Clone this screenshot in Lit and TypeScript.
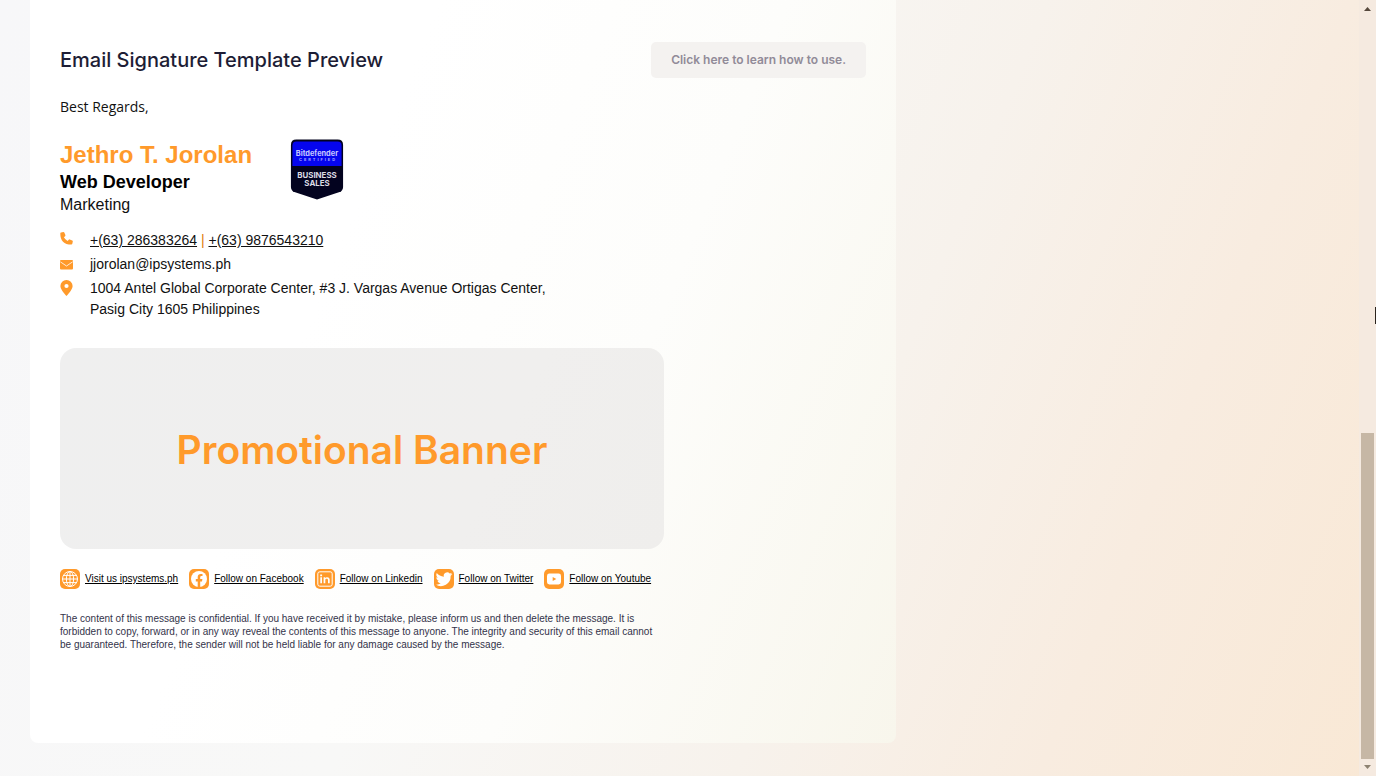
import { LitElement, html, css, svg } from "lit";
import { customElement } from "lit/decorators.js";

const glyphs = {
  globe: svg`<g fill="none" stroke="#fff" stroke-width="1"><circle cx="10" cy="10" r="7.500"/><ellipse cx="10" cy="10" rx="3.600" ry="7.500"/><path d="M10 2.500v15M2.500 10h15M3.600 6.400h12.800M3.600 13.600h12.800"/></g>`,
  facebook: svg`<circle cx="10" cy="10" r="8" fill="#fff"/><path fill="#ff9a2b" d="M8.700 18v-5.600H6.800V10h1.900V8.300c0-2.200 1.200-3.300 3.100-3.300.9 0 1.700.1 1.700.1v2h-1c-.9 0-1.300.6-1.300 1.300V10h2.200l-.4 2.400h-1.800V18z"/>`,
  linkedin: svg`<rect x="2.800" y="2.800" width="14.400" height="14.400" rx="2" fill="none" stroke="#fff" stroke-width="1"/><path fill="#fff" d="M5.300 8.300h1.700v6H5.300zM5.200 5.400h1.900v1.800H5.200zM8.600 8.300h1.600v.9c.9-1.600 4.500-1.500 4.500 1.500v3.600H13v-3.100c0-2-2.700-1.900-2.700 0v3.100H8.600z"/>`,
  twitter: svg`<path fill="#fff" transform="translate(1.800 1.600) scale(.7)" d="M23.600 4.900c-.9.400-1.800.7-2.800.8 1-.6 1.800-1.600 2.200-2.700-1 .6-2 1-3.100 1.200A4.900 4.900 0 0 0 11.500 8.700C7.400 8.500 3.800 6.500 1.400 3.600.1 5.800.7 8.700 2.900 10.200c-.8 0-1.600-.2-2.200-.6 0 2.300 1.600 4.400 3.900 4.900-.7.200-1.500.2-2.200.1.600 2 2.400 3.400 4.600 3.400A9.900 9.900 0 0 1-.3 20 14 14 0 0 0 21.200 7.400c1-.7 1.800-1.600 2.400-2.500z"/>`,
  youtube: svg`<rect x="3" y="4.500" width="14" height="11" rx="2.400" fill="#fff"/><path fill="#ff9a2b" d="M8.700 7.900v4.200l3.600-2.100z"/>`,
};

const socials = [
  { glyph: glyphs.globe, label: "Visit us ipsystems.ph" },
  { glyph: glyphs.facebook, label: "Follow on Facebook" },
  { glyph: glyphs.linkedin, label: "Follow on Linkedin" },
  { glyph: glyphs.twitter, label: "Follow on Twitter" },
  { glyph: glyphs.youtube, label: "Follow on Youtube" },
];

@customElement("app-root")
export class AppRoot extends LitElement {
  static styles = css`
    :host {
      display: flex;
      min-height: 100vh;
      font-family: "Liberation Sans", Arial, sans-serif;
      color: #111;
      background: linear-gradient(112deg, #f7f7f9 0%, #f8f8f7 38%, #f7f2ec 62%, #f8ece0 80%, #f9e8d5 100%);
    }
    * { box-sizing: border-box; }
    h1, h2, h3, p, address, ul { margin: 0; padding: 0; font-style: normal; }
    a { color: inherit; }
    .page {
      flex: 1;
      display: grid;
      grid-template-columns: 2fr 1fr;
      align-items: start;
      padding: 0 30px 33px;
    }
    .card {
      padding: 42px 30px 92px;
      border-radius: 0 0 8px 8px;
      background: linear-gradient(112deg, #fff 0%, #fff 35%, #fdfdfb 65%, #f8f6ec 100%);
    }
    .head {
      display: flex;
      justify-content: space-between;
      align-items: center;
    }
    .title {
      font: 500 20px/36px Inter, sans-serif;
      color: #1d1d35;
    }
    .learn {
      height: 36px;
      padding: 0 20px;
      border: 0;
      border-radius: 5px;
      background: #f4f2f0;
      color: #918b98;
      font: 600 12px/36px Inter, sans-serif;
    }
    .regards {
      margin-top: 18px;
      font: 14px/22px "Open Sans", sans-serif;
    }
    .person {
      display: flex;
      gap: 38px;
      margin-top: 21px;
    }
    .name { font-size: 24px; line-height: 32px; color: #ff9a2b; }
    .role { font-size: 18px; line-height: 22px; color: #000; }
    .team { font-size: 16px; line-height: 24px; }
    .badge { width: 54px; height: 61px; }
    .contacts {
      display: grid;
      grid-template-columns: 14px 1fr;
      column-gap: 16px;
      row-gap: 3px;
      margin-top: 13px;
      font-size: 14px;
      line-height: 21px;
    }
    .contacts svg { width: 14px; height: 18px; }
    .bar { color: #e07c10; }
    .signature { max-width: 604px; }
    .banner {
      display: flex;
      align-items: center;
      justify-content: center;
      height: 201px;
      margin-top: 28px;
      padding-top: 2px;
      border-radius: 16px;
      background: linear-gradient(115deg, #efefef, #f0efee 70%, #efeeec);
      color: #ff9a2b;
      font: 600 39px/56px Inter, sans-serif;
    }
    .socials {
      display: flex;
      gap: 11px;
      margin-top: 20px;
      list-style: none;
      white-space: nowrap;
    }
    .social {
      display: flex;
      align-items: center;
      gap: 5px;
      font-size: 10px;
      line-height: 20px;
      color: #000;
    }
    .social svg { width: 20px; height: 20px; flex: none; }
    .notice {
      margin-top: 23px;
      font-size: 10px;
      line-height: 13px;
      color: #33334a;
    }
    .scroll {
      display: flex;
      flex-direction: column;
      justify-content: space-between;
      align-items: center;
      width: 17px;
      padding: 5px 2px;
      background: #f5eae0;
      position: sticky;
      top: 0;
      height: 100vh;
    }
    .scroll svg { width: 9px; height: 8px; flex: none; }
    .thumb {
      width: 13px;
      height: 42.5%;
      margin: auto 0 4px;
      background: #c6b7a5;
    }
    .cursor {
      position: absolute;
      right: 0;
      top: 307px;
      width: 1px;
      height: 17px;
      background: #2b241d;
    }
  `;

  render() {
    return html`
      <main class="page">
        <section class="card">
          <header class="head">
            <h1 class="title">Email Signature Template Preview</h1>
            <button class="learn" type="button">Click here to learn how to use.</button>
          </header>
          <div class="signature">
            <p class="regards">Best Regards,</p>
            <div class="person">
              <div>
                <h2 class="name">Jethro T. Jorolan</h2>
                <h3 class="role">Web Developer</h3>
                <p class="team">Marketing</p>
              </div>
              <svg class="badge" viewBox="0 0 54 62" role="img" aria-label="Bitdefender certified business sales">
                <path fill="#03031f" d="M6 .5h42q5.500 0 5.500 5.500v42.500q0 4-3.500 5.400L27 61.500 4 53.900Q.5 52.500.5 48.500V6Q.5.500 6 .5z"/>
                <path fill="#0505ee" d="M6 2.500h42q4 0 4 4v21H2v-21q0-4 4-4z"/>
                <g text-anchor="middle" font-family="Inter, sans-serif" font-weight="700">
                  <text x="27" y="17" font-size="7.500" fill="#c8c8ff">Bitdefender</text>
                  <text x="28" y="22" font-size="4" letter-spacing="2" fill="#a9a9ff">CERTIFIED</text>
                  <text x="27" y="40" font-size="8" fill="#dcdce6">BUSINESS</text>
                  <text x="27" y="48" font-size="8" fill="#dcdce6">SALES</text>
                </g>
              </svg>
            </div>
            <address class="contacts">
              <svg viewBox="0 0 14 18" fill="#ff9a2b"><path d="M1 2.600 3.300 2q.7-.1 1 .6l1.100 2.500q.2.600-.3 1.100L3.900 7.300q1.300 2.500 3.700 3.700l1.100-1.300q.4-.5 1-.3l2.600 1.200q.7.300.5 1l-.5 2.200q-.2.700-.9.700Q.2 14.500.3 3.400.3 2.800 1 2.600z"/></svg>
              <div><a href="tel:+63286383264">+(63) 286383264</a> <span class="bar">|</span> <a href="tel:+639876543210">+(63) 9876543210</a></div>
              <svg viewBox="0 0 14 18"><rect y="6" width="13" height="9.500" rx="1" fill="#ff9a2b"/><path d="m.3 7.800 6.200 4.200 6.200-4.200" fill="none" stroke="#fff" stroke-width=".8"/></svg>
              <div>jjorolan@ipsystems.ph</div>
              <svg viewBox="0 0 14 18"><path fill="#ff9a2b" fill-rule="evenodd" d="M6.500 2A6 6 0 0 0 .4 8c0 3 3.700 7.500 6.100 10 2.400-2.500 6.100-7 6.100-10a6 6 0 0 0-6.100-6zm0 3.900a2.100 2.100 0 1 1 0 4.200 2.100 2.100 0 0 1 0-4.200z"/></svg>
              <div>1004 Antel Global Corporate Center, #3 J. Vargas Avenue Ortigas Center,<br>Pasig City 1605 Philippines</div>
            </address>
            <div class="banner">Promotional Banner</div>
            <ul class="socials">
              ${socials.map((s) => html`
                <li class="social">
                  <svg viewBox="0 0 20 20"><rect width="20" height="20" rx="5" fill="#ff9a2b"/>${s.glyph}</svg>
                  <a href="#">${s.label}</a>
                </li>`)}
            </ul>
            <p class="notice">The content of this message is confidential. If you have received it by mistake, please inform us and then delete the message. It is forbidden to copy, forward, or in any way reveal the contents of this message to anyone. The integrity and security of this email cannot be guaranteed. Therefore, the sender will not be held liable for any damage caused by the message.</p>
          </div>
        </section>
      </main>
      <div class="scroll" aria-hidden="true">
        <svg viewBox="0 0 9 8"><path fill="#55483c" d="M4.500 2 8 6H1z"/></svg>
        <div class="thumb"></div>
        <svg viewBox="0 0 9 8"><path fill="#8d8271" d="M1 2h7L4.500 6z"/></svg>
      </div>
      <div class="cursor"></div>
    `;
  }
}
